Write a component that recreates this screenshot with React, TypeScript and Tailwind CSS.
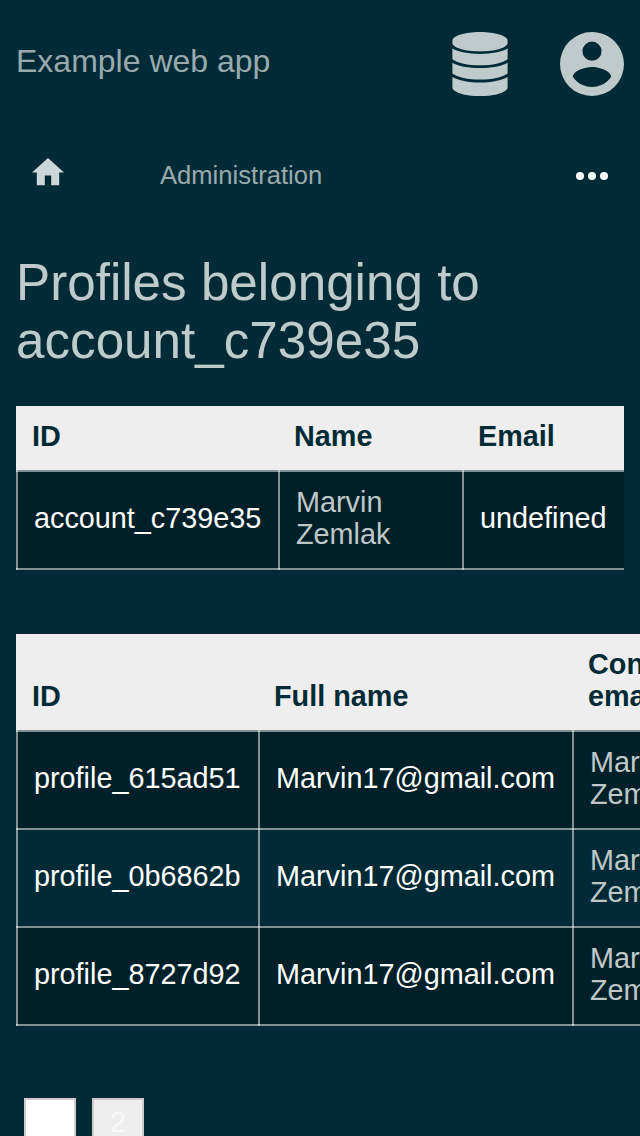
import React from 'react';

const LINE =
  'bg-[linear-gradient(#ffffff80,#ffffff80),linear-gradient(#ffffff80,#ffffff80)] bg-no-repeat bg-[position:left_top,left_top] bg-[size:2px_100%,100%_2px]';

const LAST_LINE =
  'bg-[linear-gradient(#ffffff80,#ffffff80),linear-gradient(#ffffff80,#ffffff80),linear-gradient(#ffffff80,#ffffff80)] bg-no-repeat bg-[position:left_top,left_top,left_bottom] bg-[size:2px_100%,100%_2px,100%_2px]';

type Column = { label: string; width: string; muted?: boolean };

function DataTable({ columns, rows, className }: { columns: Column[]; rows: string[][]; className: string }) {
  return (
    <table className={`table-fixed border-separate border-spacing-0 text-left text-[28.8px] leading-8 ${className}`}>
      <thead>
        <tr>
          {columns.map((c) => (
            <th key={c.label} className={`bg-[#eee] px-4 pt-3.5 pb-[18px] align-bottom font-bold text-[#002b36] ${c.width}`}>
              {c.label}
            </th>
          ))}
        </tr>
      </thead>
      <tbody>
        {rows.map((row, r) => {
          const last = r === rows.length - 1;
          return (
            <tr key={row[0]} className={r % 2 === 0 ? 'bg-[#002029]' : ''}>
              {row.map((value, i) => (
                <td
                  key={i}
                  className={`pl-[18px] pt-4 align-middle ${last ? `h-[100px] pb-5 ${LAST_LINE}` : `h-[98px] pb-[18px] ${LINE}`} ${
                    columns[i].muted ? 'pr-4 text-[#bfc7c9]' : 'whitespace-nowrap text-white'
                  }`}
                >
                  {value}
                </td>
              ))}
            </tr>
          );
        })}
      </tbody>
    </table>
  );
}

function DatabaseIcon() {
  return (
    <svg viewBox="0 0 56 64" className="h-16 w-14" fill="currentColor">
      <path d="M28 0C13 0 .4 3.800 .4 8.600V11C.4 15.600 13 19.400 28 19.400S55.600 15.600 55.600 11V8.600C55.600 3.800 43 0 28 0Z" />
      <path d="M.4 16.500C6 20 17 21.900 28 21.900S50 20 55.600 16.500V27.200C51 31 40 33.300 28 33.300S5 31 .4 27.200Z" />
      <path d="M.4 30.700C6 34.200 17 36.100 28 36.100S50 34.200 55.600 30.700V41.500C51 45.300 40 47.600 28 47.600S5 45.300 .4 41.500Z" />
      <path d="M.4 44.900C6 48.400 17 50.400 28 50.400S50 48.400 55.600 44.900V55.400C55.600 60.200 43 64 28 64S.4 60.200 .4 55.400Z" />
    </svg>
  );
}

function AccountIcon() {
  return (
    <svg viewBox="2 2 20 20" className="size-16" fill="currentColor">
      <path d="M12 19.200C9.500 19.200 7.290 17.920 6 16C6.030 14 10 12.900 12 12.900C14 12.900 17.970 14 18 16C16.710 17.920 14.500 19.200 12 19.200M12 5A3 3 0 0 1 15 8A3 3 0 0 1 12 11A3 3 0 0 1 9 8A3 3 0 0 1 12 5M12 2A10 10 0 0 0 2 12A10 10 0 0 0 12 22A10 10 0 0 0 22 12C22 6.470 17.500 2 12 2Z" />
    </svg>
  );
}

export default function App() {
  return (
    <div className="h-[1136px] w-[640px] overflow-hidden bg-[#002b36] font-['Liberation_Sans',Arial,sans-serif]">
      <header className="flex h-32 items-center justify-between px-4">
        <h1 className="pb-1.5 text-[32px] leading-9 text-[#99aaaf]">Example web app</h1>
        <div className="flex gap-[52px] text-[#bfcacd]">
          <DatabaseIcon />
          <AccountIcon />
        </div>
      </header>

      <nav className="flex h-24 items-center px-8">
        <svg viewBox="2 3 20 17" className="mb-2 h-[27.2px] w-8 text-[#ccd5d7]" fill="currentColor">
          <path d="M10 20V14H14V20H19V12H22L12 3L2 12H5V20H10Z" />
        </svg>
        <span className="ml-24 pb-0.5 text-[25.6px] leading-8 text-[#99aaaf]">Administration</span>
        <svg viewBox="0 0 32 8" className="ml-auto h-2 w-8 text-white" fill="currentColor">
          <circle cx="4" cy="4" r="4" />
          <circle cx="16" cy="4" r="4" />
          <circle cx="28" cy="4" r="4" />
        </svg>
      </nav>

      <main className="px-4 pt-[30px]">
        <h2 className="text-[51.2px] leading-[58px] text-[#bfcacd]">
          Profiles belonging to account_c739e35
        </h2>
        <div className="mt-9 overflow-hidden">
          <DataTable
            className="w-[608px]"
            columns={[
              { label: 'ID', width: 'w-[262px]' },
              { label: 'Name', width: 'w-[184px]', muted: true },
              { label: 'Email', width: 'w-[162px]' },
            ]}
            rows={[['account_c739e35', 'Marvin Zemlak', 'undefined']]}
          />
        </div>
        <div className="mt-16">
          <DataTable
            className="w-[740px]"
            columns={[
              { label: 'ID', width: 'w-[242px]' },
              { label: 'Full name', width: 'w-[314px]' },
              { label: 'Contact email', width: 'w-[184px]', muted: true },
            ]}
            rows={[
              ['profile_615ad51', 'Marvin17@gmail.com', 'Marvin Zemlak'],
              ['profile_0b6862b', 'Marvin17@gmail.com', 'Marvin Zemlak'],
              ['profile_8727d92', 'Marvin17@gmail.com', 'Marvin Zemlak'],
            ]}
          />
        </div>
        <div className="mt-[72px] flex gap-4 px-2 text-[28.8px] leading-8">
          <button className="h-[52px] w-[52px] border-2 border-[#ccc] bg-white" />
          <button className="flex h-[52px] w-[52px] items-center justify-center border-2 border-[#ccc] bg-[#eee] pb-1 text-[#fafafa]">
            2
          </button>
        </div>
      </main>
    </div>
  );
}
